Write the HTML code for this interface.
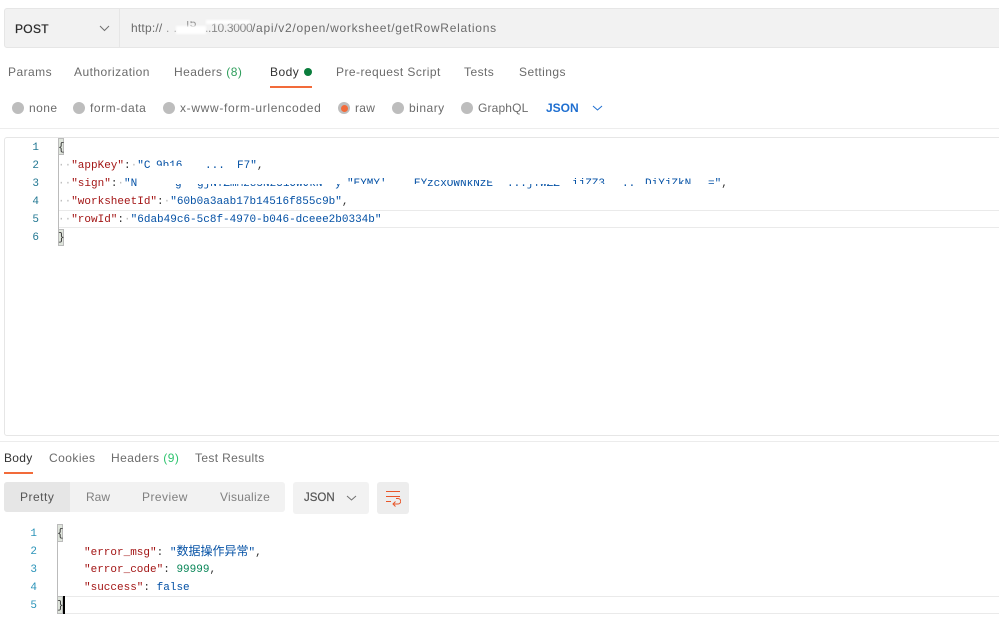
<!DOCTYPE html>
<html><head><meta charset="utf-8">
<style>
html,body{margin:0;padding:0;background:#fff}
#p{position:relative;width:999px;height:623px;overflow:hidden;background:#fff;font-family:"Liberation Sans","Noto Sans CJK SC",sans-serif;font-size:12px;color:#6b6b6b}
#p div{position:absolute;white-space:pre}
.t{line-height:16px;height:16px;letter-spacing:.45px}
.c{font-family:"Liberation Mono","Noto Sans CJK SC",monospace;font-size:11px;line-height:18px;height:18px;letter-spacing:0}
.n{color:#237893;text-align:right;width:12px}
.k{color:#a31515}.s{color:#0451a5}.p{color:#333}.d{color:#bbb}
.top{clip-path:inset(0 0 9px 0)}
.bot{clip-path:inset(9px 0 0 0)}
.dot{width:12px;height:12px;border-radius:50%;background:#bdbdbd}
</style></head><body><div id="p">

<!-- URL bar -->
<div style="left:4px;top:8px;width:1000px;height:38px;background:#f2f2f2;border:1px solid #e6e6e6;border-radius:3px"></div>
<div style="left:119px;top:9px;width:1px;height:38px;background:#e6e6e6"></div>
<div class="t" style="left:15px;top:21px;color:#2b2b2b;letter-spacing:.3px;-webkit-text-stroke:.25px #2b2b2b">POST</div>
<svg style="position:absolute;left:99px;top:24px" width="11" height="8"><path d="M1 2l4.5 4.5L10 2" fill="none" stroke="#707070" stroke-width="1"/></svg>
<div class="t" style="left:131px;top:20px;letter-spacing:.2px">http://</div>
<div class="t" style="left:166px;top:20px;color:#999">. .</div>
<div class="t" style="left:186px;top:15px;color:#999;clip-path:inset(6px 0 0 0)">I5</div>
<div class="t" style="left:205px;top:20px;color:#888;letter-spacing:-.3px">..10.3000</div>
<div class="t" style="left:252px;top:20px;letter-spacing:.72px">/api/v2/open/worksheet/getRowRelations</div>
<div style="left:176px;top:26px;width:30px;height:8px;background:#fff;filter:blur(1px)"></div>
<div style="left:206px;top:20px;width:44px;height:4px;background:#fff;filter:blur(1px)"></div>

<!-- Request tabs -->
<div class="t" style="left:8px;top:64px">Params</div>
<div class="t" style="left:74px;top:64px">Authorization</div>
<div class="t" style="left:174px;top:64px">Headers <span style="color:#2f9e5c">(8)</span></div>
<div class="t" style="left:270px;top:64px;color:#333">Body</div>
<div style="left:304px;top:68px;width:8px;height:8px;border-radius:50%;background:#0a7d3c"></div>
<div style="left:270px;top:86px;width:42px;height:2px;background:#f26b3a"></div>
<div class="t" style="left:336px;top:64px">Pre-request Script</div>
<div class="t" style="left:464px;top:64px">Tests</div>
<div class="t" style="left:519px;top:64px">Settings</div>

<!-- Body type -->
<div class="dot" style="left:12px;top:102px"></div><div class="t" style="left:29px;top:100px">none</div>
<div class="dot" style="left:73px;top:102px"></div><div class="t" style="left:90px;top:100px;letter-spacing:.55px">form-data</div>
<div class="dot" style="left:163px;top:102px"></div><div class="t" style="left:180px;top:100px;letter-spacing:.67px">x-www-form-urlencoded</div>
<div class="dot" style="left:338px;top:102px"></div><div style="left:341px;top:105px;width:7px;height:7px;border-radius:50%;background:#f26b3a"></div><div class="t" style="left:355px;top:100px;letter-spacing:.3px">raw</div>
<div class="dot" style="left:392px;top:102px"></div><div class="t" style="left:409px;top:100px;letter-spacing:.5px">binary</div>
<div class="dot" style="left:461px;top:102px"></div><div class="t" style="left:478px;top:100px;letter-spacing:.15px">GraphQL</div>
<div class="t" style="left:546px;top:100px;color:#1f6fd0;font-weight:700;letter-spacing:0">JSON</div>
<svg style="position:absolute;left:592px;top:104px" width="11" height="8"><path d="M1 2l4.5 4L10 2" fill="none" stroke="#1f6fd0" stroke-width="1"/></svg>
<div style="left:0;top:128px;width:999px;height:1px;background:#ededed"></div>

<!-- Editor -->
<div style="left:4px;top:137px;width:1000px;height:297px;border:1px solid #e6e6e6;border-radius:3px"></div>
<div style="left:59px;top:210px;width:940px;height:16px;border-top:1px solid #eaeaea;border-bottom:1px solid #eaeaea"></div>
<div style="left:58px;top:146px;width:1px;height:92px;background:#bbb"></div>
<div style="left:58px;top:138px;width:6px;height:17px;background:#dfe5dc;border:1px solid #bbb;box-sizing:border-box"></div>
<div style="left:58px;top:229px;width:6px;height:17px;background:#dfe5dc;border:1px solid #bbb;box-sizing:border-box"></div>

<div class="c n" style="left:27px;top:139px">1</div>
<div class="c n" style="left:27px;top:157px">2</div>
<div class="c n" style="left:27px;top:175px">3</div>
<div class="c n" style="left:27px;top:193px">4</div>
<div class="c n" style="left:27px;top:211px">5</div>
<div class="c n" style="left:27px;top:229px">6</div>

<div class="c p" style="left:58px;top:139px">{</div>
<div class="c" style="left:58px;top:157px"><span class="d">··</span><span class="k">"appKey"</span><span class="p">:</span><span class="d">·</span><span class="s">"C</span></div>
<div class="c s top" style="left:156px;top:157px">9b16</div>
<div class="c s bot" style="left:205px;top:157px">...</div>
<div class="c" style="left:237px;top:157px"><span class="s">F7"</span><span class="p">,</span></div>
<div class="c" style="left:58px;top:175px"><span class="d">··</span><span class="k">"sign"</span><span class="p">:</span><span class="d">·</span><span class="s">"N</span></div>
<div class="c s bot" style="left:175px;top:175px">g</div>
<div class="c s bot" style="left:197px;top:175px">gjNTZmMzc5N2U1OWJkN</div>
<div class="c s bot" style="left:335px;top:175px">y</div>
<div class="c s top" style="left:347px;top:175px">"EYMY'</div>
<div class="c s top" style="left:414px;top:175px">EY</div>
<div class="c s" style="left:427px;top:175px;clip-path:inset(5px 0 0 0)">zcxOWNkNzE</div>
<div class="c s bot" style="left:507px;top:175px">...jYWZZ</div>
<div class="c s top" style="left:572px;top:175px">ijZZ3</div>
<div class="c s bot" style="left:622px;top:175px">..</div>
<div class="c s top" style="left:645px;top:175px">DiYjZkN</div>
<div class="c" style="left:708px;top:175px"><span class="s">="</span><span class="p">,</span></div>
<div class="c" style="left:58px;top:193px"><span class="d">··</span><span class="k">"worksheetId"</span><span class="p">:</span><span class="d">·</span><span class="s">"60b0a3aab17b14516f855c9b"</span><span class="p">,</span></div>
<div class="c" style="left:58px;top:211px"><span class="d">··</span><span class="k">"rowId"</span><span class="p">:</span><span class="d">·</span><span class="s">"6dab49c6-5c8f-4970-b046-dceee2b0334b"</span></div>
<div class="c p" style="left:58px;top:229px">}</div>

<!-- Response -->
<div style="left:0;top:441px;width:999px;height:1px;background:#ececec"></div>
<div class="t" style="left:4px;top:450px;color:#333;letter-spacing:.3px">Body</div>
<div style="left:4px;top:472px;width:29px;height:2px;background:#f26b3a"></div>
<div class="t" style="left:49px;top:450px">Cookies</div>
<div class="t" style="left:111px;top:450px">Headers <span style="color:#2fc46f">(9)</span></div>
<div class="t" style="left:195px;top:450px;letter-spacing:.35px">Test Results</div>

<div style="left:4px;top:482px;width:281px;height:30px;background:#f2f2f2;border-radius:3px"></div>
<div style="left:4px;top:482px;width:66px;height:30px;background:#e6e6e6;border-radius:3px 0 0 3px"></div>
<div class="t" style="left:20px;top:489px;color:#555;letter-spacing:.5px">Pretty</div>
<div class="t" style="left:86px;top:489px;color:#808080;letter-spacing:0">Raw</div>
<div class="t" style="left:142px;top:489px;color:#808080">Preview</div>
<div class="t" style="left:220px;top:489px;color:#808080;letter-spacing:.25px">Visualize</div>

<div style="left:293px;top:482px;width:76px;height:32px;background:#f2f2f2;border-radius:3px"></div>
<div class="t" style="left:304px;top:490px;color:#555;font-size:11.5px;letter-spacing:0;-webkit-text-stroke:.2px #555">JSON</div>
<svg style="position:absolute;left:346px;top:494px" width="11" height="8"><path d="M1 2l4.5 4L10 2" fill="none" stroke="#707070" stroke-width="1"/></svg>

<div style="left:377px;top:482px;width:32px;height:32px;background:#ededed;border-radius:3px"></div>
<svg style="position:absolute;left:385px;top:490px" width="16" height="18"><path d="M1 1.5h14M1 6.5h14M1 11.5h5" fill="none" stroke="#e8562a" stroke-width="1"/><path d="M11 8.5h2a2.5 2.5 0 0 1 0 5.5H8.5M10.5 11.5l-2.5 2.5 2.5 2.5" fill="none" stroke="#e8562a" stroke-width="1"/></svg>

<div style="left:59px;top:596px;width:940px;height:16px;border-top:1px solid #eaeaea;border-bottom:1px solid #eaeaea"></div>
<div style="left:57px;top:532px;width:1px;height:72px;background:#bbb"></div>
<div style="left:57px;top:524px;width:6px;height:18px;background:#dfe5dc;border:1px solid #bbb;box-sizing:border-box"></div>
<div style="left:57px;top:596px;width:6px;height:18px;background:#dfe5dc;border:1px solid #bbb;box-sizing:border-box"></div>
<div style="left:63px;top:596px;width:2px;height:18px;background:#000"></div>

<div class="c n" style="left:25px;top:525px;color:#2a93b8">1</div>
<div class="c n" style="left:25px;top:543px;color:#2a93b8">2</div>
<div class="c n" style="left:25px;top:561px;color:#2a93b8">3</div>
<div class="c n" style="left:25px;top:579px;color:#2a93b8">4</div>
<div class="c n" style="left:25px;top:597px;color:#2a93b8">5</div>

<div class="c p" style="left:57px;top:525px">{</div>
<div class="c" style="left:84px;top:543px"><span class="k">"error_msg"</span><span class="p">:</span> <span class="s">"<span style="font-size:12px">数据操作异常</span>"</span><span class="p">,</span></div>
<div class="c" style="left:84px;top:561px"><span class="k">"error_code"</span><span class="p">:</span> <span style="color:#098658">99999</span><span class="p">,</span></div>
<div class="c" style="left:84px;top:579px"><span class="k">"success"</span><span class="p">:</span> <span style="color:#0451a5">false</span></div>
<div class="c p" style="left:57px;top:597px">}</div>

</div></body></html>
